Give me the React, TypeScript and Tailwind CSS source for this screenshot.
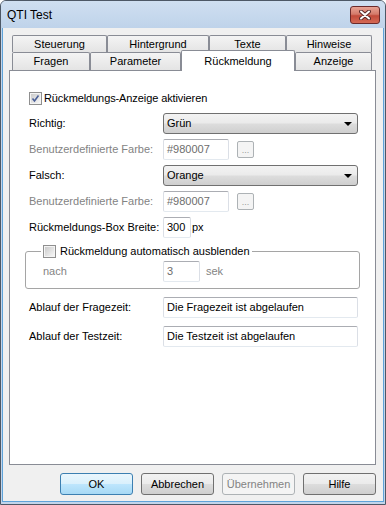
import React from "react";

const tabBase =
  "flex items-center justify-center border-x border-t border-[#898c95] rounded-t-[2px] text-[11px] text-black bg-[linear-gradient(#f4f4f4,#e4e4e4)]";

function Tab({ label, w }: { label: string; w: string }) {
  return <div className={`${tabBase} ${w} h-full`}>{label}</div>;
}

function CheckBox({ checked }: { checked?: boolean }) {
  return (
    <span className="relative flex h-[13px] w-[13px] shrink-0 items-center justify-center border border-[#8f8f8f] bg-white">
      <span className="h-[11px] w-[11px] border border-[#f4f4f4] bg-[linear-gradient(135deg,#cbcbcb,#f6f6f6)]" />
      {checked && (
        <svg width="9" height="9" viewBox="0 0 9 9" className="absolute left-[1px] top-[1px]">
          <path d="M1.5 4.5 L3.5 7 L7.5 1.5" fill="none" stroke="#4a5f97" strokeWidth="1.6" />
        </svg>
      )}
    </span>
  );
}

function Select({ value }: { value: string }) {
  return (
    <div className="flex h-[21px] w-[195px] items-center justify-between rounded-[3px] border border-[#707070] bg-[linear-gradient(#f3f3f3_0%,#ebebeb_45%,#dcdcdc_55%,#cfcfcf_100%)] pl-[3px] pr-[5px] text-[11px] text-black">
      <span>{value}</span>
      <svg width="8" height="4" viewBox="0 0 8 4">
        <path d="M0 0 H8 L4 4 Z" fill="#000" />
      </svg>
    </div>
  );
}

function TextBox({ value, w, disabled }: { value: string; w: string; disabled?: boolean }) {
  return (
    <div
      className={`flex h-[21px] ${w} items-center rounded-[2px] border border-[#abadb3] border-b-[#e3e9ef] border-x-[#dbdfe6] bg-white pl-[3px] text-[11px] ${
        disabled ? "text-[#6d6d6d]" : "text-black"
      }`}
    >
      {value}
    </div>
  );
}

function Row({ label, gray, children, className }: { label: string; gray?: boolean; children: React.ReactNode; className?: string }) {
  return (
    <div className={`flex items-center ${className ?? ""}`}>
      <div className={`w-[134px] text-[11px] ${gray ? "text-[#838383]" : "text-black"}`}>{label}</div>
      {children}
    </div>
  );
}

function DotsButton() {
  return (
    <div className="ml-[8px] flex h-[17px] w-[17px] items-end justify-center rounded-[2px] border border-[#adb2b5] bg-[#f4f4f4] pb-[2px] text-[9px] leading-[9px] text-[#9a9a9a]">
      ...
    </div>
  );
}

function Button({ label, kind }: { label: string; kind?: "default" | "disabled" }) {
  const look =
    kind === "default"
      ? "border-[#3c7fb1] bg-[linear-gradient(#eaf6fd_0%,#d9f0fc_50%,#bee6fd_50%,#a7d9f5_100%)] text-black"
      : kind === "disabled"
        ? "border-[#adb2b5] bg-[#f4f4f4] text-[#838383]"
        : "border-[#707070] bg-[linear-gradient(#f2f2f2_0%,#ebebeb_50%,#dddddd_50%,#cfcfcf_100%)] text-black";
  return (
    <div className={`flex h-[22px] w-[73px] items-center justify-center rounded-[3px] border text-[11px] ${look}`}>
      {label}
    </div>
  );
}

export default function App() {
  return (
    <div className="flex h-[505px] w-[386px] flex-col rounded-t-[6px] border border-[#4d5866] bg-[#c2d5eb] font-['Liberation_Sans',Arial,sans-serif]">
      {/* title bar */}
      <div className="flex h-[27px] shrink-0 items-center justify-between rounded-t-[5px] bg-[linear-gradient(#cfdff1,#bfd3ea)] pl-[6px] pr-[5px]">
        <span className="text-[12px] text-black">QTI Test</span>
        <div className="flex h-[18px] w-[30px] items-center justify-center rounded-[3px] border border-[#6b2a2a] bg-[linear-gradient(#e8a394_0%,#d47a6a_45%,#c24a3a_55%,#d56a55_100%)]">
          <svg width="12" height="10" viewBox="0 0 12 10">
            <path d="M2 1.5 L10 8.5 M10 1.5 L2 8.5" stroke="#5a2a2a" strokeWidth="4" strokeLinecap="round" />
            <path d="M2 1.5 L10 8.5 M10 1.5 L2 8.5" stroke="#fff" strokeWidth="2" strokeLinecap="round" />
          </svg>
        </div>
      </div>

      {/* client area */}
      <div className="mx-[1px] mb-[2px] flex flex-1 flex-col border-x border-b border-[#5fa3d9] bg-[#f0f0f0]">
        {/* tabs */}
        <div className="ml-[9px] mt-[7px] flex h-[17px]">
          <Tab label="Steuerung" w="w-[95px]" />
          <Tab label="Hintergrund" w="w-[102px]" />
          <Tab label="Texte" w="w-[77px]" />
          <Tab label="Hinweise" w="w-[86px]" />
        </div>
        <div className="ml-[9px] flex h-[18px]">
          <Tab label="Fragen" w="w-[78px]" />
          <Tab label="Parameter" w="w-[91px]" />
          <div className="relative z-10 -mt-[2px] flex h-[21px] w-[114px] items-start justify-center rounded-t-[2px] border-x border-t border-[#898c95] bg-white pt-[2px] text-[11px] text-black">
            Rückmeldung
          </div>
          <Tab label="Anzeige" w="w-[77px]" />
        </div>

        {/* panel */}
        <div className="ml-[6px] flex h-[395px] w-[367px] flex-col border border-[#898c95] bg-white pl-[19px]">
          <div className="mt-[17px] flex h-[20px] items-center gap-[2px] text-[11px] tracking-[-0.1px] text-black">
            <CheckBox checked />
            <span>Rückmeldungs-Anzeige aktivieren</span>
          </div>

          <Row label="Richtig:" className="mt-[5px]">
            <Select value="Grün" />
          </Row>
          <Row label="Benutzerdefinierte Farbe:" gray className="mt-[5px]">
            <TextBox value="#980007" w="w-[66px]" disabled />
            <DotsButton />
          </Row>
          <Row label="Falsch:" className="mt-[5px]">
            <Select value="Orange" />
          </Row>
          <Row label="Benutzerdefinierte Farbe:" gray className="mt-[5px]">
            <TextBox value="#980007" w="w-[66px]" disabled />
            <DotsButton />
          </Row>
          <Row label="Rückmeldungs-Box Breite:" className="mt-[5px]">
            <TextBox value="300" w="w-[28px]" />
            <span className="ml-px text-[11px] text-black">px</span>
          </Row>

          <fieldset className="-ml-[4px] mt-[7px] w-[335px] rounded-[3px] border border-[#a5a5a5] px-[15px] pb-[6px]">
            <legend className="flex h-[13px] items-center gap-[4px] px-[2px] text-[11px] text-black">
              <CheckBox />
              <span>Rückmeldung automatisch ausblenden</span>
            </legend>
            <div className="mt-[3px] flex items-center pl-[2px]">
              <div className="w-[120px] text-[11px] text-[#838383]">nach</div>
              <TextBox value="3" w="w-[37px]" disabled />
              <span className="ml-[6px] text-[11px] text-[#838383]">sek</span>
            </div>
          </fieldset>

          <Row label="Ablauf der Fragezeit:" className="mt-[8px]">
            <TextBox value="Die Fragezeit ist abgelaufen" w="w-[195px]" />
          </Row>
          <Row label="Ablauf der Testzeit:" className="mt-[8px]">
            <TextBox value="Die Testzeit ist abgelaufen" w="w-[195px]" />
          </Row>
        </div>

        {/* buttons */}
        <div className="mt-[8px] flex justify-end gap-[8px] pr-[7px]">
          <Button label="OK" kind="default" />
          <Button label="Abbrechen" />
          <Button label="Übernehmen" kind="disabled" />
          <Button label="Hilfe" />
        </div>
      </div>
    </div>
  );
}
